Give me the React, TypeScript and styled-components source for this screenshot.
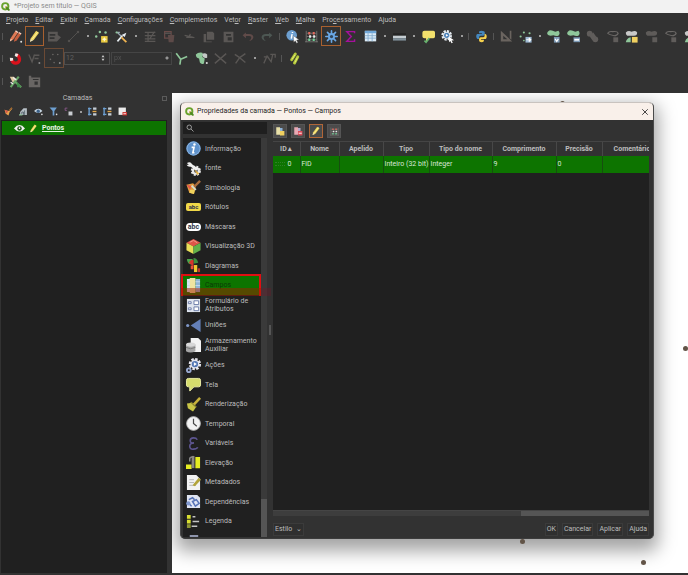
import React from 'react';
import styled, { createGlobalStyle, css } from 'styled-components';

const GlobalStyle = createGlobalStyle`
  * { box-sizing: border-box; }
  html, body, #root { height: 100%; margin: 0; }
  body {
    overflow: hidden;
    background: #323232;
    color: #bdbdbd;
    font: 7px/9px Roboto, "Noto Sans", sans-serif;
  }
  button, input, select { font: inherit; color: inherit; }
`;

/* ---------- icons ---------- */

const Svg = styled.svg<{ $size: number }>`
  display: block;
  flex: none;
  width: ${(p) => p.$size}px;
  height: ${(p) => p.$size}px;
  overflow: visible;
`;

const DIM = '#5a5755';
const YEL = '#f0d060';
const MINT = '#8fc79a';

const art: Record<string, React.ReactNode> = {
  logo: (
    <>
      <circle cx="7.6" cy="7.6" r="5.6" fill="none" stroke="#6aa32e" strokeWidth="3.4" />
      <path d="M8 8l3 .4 4.4 4.6-.2 2.4-2.4.1L8.300 11z" fill="#4f8a22" />
      <path d="M7.600 7.600l3.200.2-2.700 3z" fill="#e9a13b" />
    </>
  ),
  pencils: (
    <>
      <path d="M1 14l1-4L8 1l3 2-6 9z" fill="#e07a55" />
      <path d="M6 14.500l1-4L12 3l3 2-5.500 8z" fill="#c85f3e" />
      <path d="M8 1l3 2M12 3l3 2" stroke="#f3d3c4" strokeWidth="1.600" />
      <path d="M1 14l1-3 2 1z" fill="#f1dcc8" />
      <circle cx="15" cy="14.500" r="1.200" fill="#ddd" />
    </>
  ),
  pencil: (
    <>
      <path d="M2.500 14.500l1-4.500L10 1l3.600 2.400-6.600 9z" fill="#efd75c" />
      <path d="M5.200 11.400L12 2.400" stroke="#fff3b0" strokeWidth="1" />
      <path d="M2.500 14.500l.8-3.500 2.800 1.800z" fill="#e8dcc0" />
    </>
  ),
  save: <path d="M0 2h12v4l4 3-5 5H0zM2 5v2h7V5zM2 9v2h6V9z" fill={DIM} fillRule="evenodd" />,
  line: (
    <g stroke={DIM} fill={DIM}>
      <path d="M3 13L13 3" />
      <circle cx="2.500" cy="13.500" r="1" />
      <circle cx="13.500" cy="2.500" r="1" />
    </g>
  ),
  addPoint: (
    <>
      <g fill={MINT}>
        <circle cx="1.500" cy="8" r="1.500" />
        <circle cx="6" cy="2.500" r="1.500" />
        <circle cx="13" cy="3" r="1.500" />
      </g>
      <path d="M7.500 7.500h8v8h-8z" fill="#e9c93f" />
      <path d="M11.500 8.500l1 2 2 .9-2 1-1 2-1-2-2-1 2-.9z" fill="#fff8cf" />
    </>
  ),
  tools: (
    <>
      <path d="M1 3h5M3 3l5 5" stroke="#9aaab3" strokeWidth="1.600" fill="none" />
      <path d="M3 14L9 7" stroke="#e8eef2" strokeWidth="2" />
      <path d="M8 9l6 6" stroke="#f0b450" strokeWidth="2.200" />
      <path d="M8 6l6-2.500-2 5z" fill="#e8eef2" />
      <circle cx="2" cy="3" r="1.300" fill={MINT} />
    </>
  ),
  formEdit: (
    <g fill="none" stroke={DIM} strokeWidth="1.500">
      <path d="M1 3h13M1 7h13M1 11h13M1 14h13M5 3v11M13 2L7 11" />
    </g>
  ),
  trash: (
    <>
      <path d="M2 2h8v8H2z" fill="none" stroke="#6a4b48" strokeWidth="1.500" />
      <path d="M6 6h8l-1 9H7z" fill="#5d4a48" />
      <path d="M2 4h8" stroke={DIM} strokeWidth="1.500" />
    </>
  ),
  cut: <path d="M2 6.500l12 3M4 9h9M9 5l-1 3" stroke={DIM} strokeWidth="1.600" fill="none" />,
  copy: <path d="M6 2h7l2 2v8H6zM2 5h3v9h7v1H2z" fill={DIM} />,
  paste: <path d="M2 2h12v13H2zM5 5v2h6V5zM7 9v4h5V9z" fill={DIM} fillRule="evenodd" />,
  undo: (
    <path d="M6 3L2 6.500l4 3.500V7.500h4c4 0 3 4 0 6 7-1 7-8.500 0-8.500H6z" fill="#604b49" />
  ),
  redo: (
    <path d="M10 3l4 3.500-4 3.500V7.500H6c-4 0-3 4 0 6-7-1-7-8.500 0-8.500h4z" fill="#4d5753" />
  ),
  identify: (
    <>
      <circle cx="7" cy="6.500" r="6.500" fill="#6d9fd0" />
      <path d="M7.500 5l-1 5.500M8 2.500v1.300" stroke="#fff" strokeWidth="1.800" />
      <path d="M9 7l7 5-3 .4 1.600 3-1.500.8-1.600-3L9.600 15z" fill="#fff" stroke="#4a4a4a" strokeWidth=".4" />
    </>
  ),
  abacus: (
    <>
      <path d="M1.500 1v14M14.500 1v14M0 14.500h16M2 4h12M2 8h12M2 12h12" stroke="#7d7a78" fill="none" />
      <path d="M4 2.500h2.500v3H4zM9.500 2.500H12v3H9.500z" fill="#e56a5e" />
      <path d="M5 6.500h2.500v3H5zM10 6.500h2.500v3H10z" fill="#e8e8e8" />
      <path d="M4 10.500h2.500v3H4zM9.500 10.500H12v3H9.500z" fill="#6ed096" />
    </>
  ),
  gear: (
    <>
      <g stroke="#69a8e6" strokeWidth="2" strokeLinecap="round">
        <path d="M8 1v14M1 8h14M3 3l10 10M13 3L3 13" />
      </g>
      <circle cx="8" cy="8" r="4.300" fill="#69a8e6" />
      <circle cx="8" cy="8" r="2" fill="#32475c" />
    </>
  ),
  sigma: <path d="M13 4V2H3.500L9 8l-5.500 6H13v-2.500" fill="none" stroke="#a5109b" strokeWidth="1.800" />,
  table: (
    <>
      <path d="M1 1h14v13H1z" fill="#dcebf7" />
      <path d="M1 1h14v3H1z" fill="#6fa7d8" />
      <path d="M5 1v13M1 7h14M1 10h14M10 4v10" stroke="#7fa9cc" />
    </>
  ),
  ruler: (
    <>
      <path d="M0 4h16v3H0z" fill="#242424" />
      <path d="M0 7h16v3H0z" fill="#c5cdd2" />
      <path d="M0 10h16v3H0z" fill="#81919b" />
    </>
  ),
  tip: (
    <>
      <path d="M3 1h11q2 0 2 2v5q0 2-2 2H9l-4 4V10H3Q.500 10 .500 8V3Q.500 1 3 1z" fill="#f2e06c" />
      <path d="M3 13l2 2 4-5" stroke="#67b26f" strokeWidth="2" fill="none" />
    </>
  ),
  gearCursor: (
    <>
      <circle cx="7" cy="6.500" r="5.300" fill="none" stroke="#e6edf3" strokeWidth="2.600" strokeDasharray="2.700 1.400" />
      <circle cx="7" cy="6.500" r="4.400" fill="#e6edf3" />
      <circle cx="7" cy="6.500" r="3.200" fill="#4a80b8" />
      <path d="M6 4.800l3 1.700-3 1.700z" fill="#fff" />
      <path d="M9.500 8l6.500 4.500-3 .4 1.500 2.700-1.500.8-1.500-3-1.500 1.600z" fill="#fff" />
    </>
  ),
  python: (
    <>
      <path d="M8 1C5 1 5 2 5 4h3.500v1H3C1 5 1 11 3.500 11H5V9q0-2 2-2h3q2 0 2-2V3q0-2-4-2z" fill="#4587bd" />
      <path d="M8 15c3 0 3-1 3-3H7.500v-1H13c2 0 2-6-.5-6H11.800v2q0 2-2 2H7q-2 0-2 2v2q0 2 3 2z" fill="#f6d14d" />
    </>
  ),
  setSquare: <path d="M1 1l14 13H1zM4 7v4.500h5zM12 1h2v11l-2-2z" fill="#6a645f" fillRule="evenodd" />,
  movePoints: (
    <>
      <g fill={MINT}>
        <circle cx="2" cy="8" r="1.300" />
        <circle cx="6" cy="3" r="1.300" />
        <circle cx="13" cy="4" r="1.300" />
        <circle cx="6" cy="13" r="1" />
      </g>
      <path d="M8 8.500h7.500v7H8z" fill="#9db9d3" />
      <path d="M9 12h5M12 9.800l2.400 2.200-2.400 2.200" stroke="#fff" strokeWidth="1.400" fill="none" />
    </>
  ),
  shapeRotate: (
    <>
      <path d="M1 2q3-3 6-1t7 0q3 3 0 6-3 1-6-.5-4 1-6 0-3-2-1-4.500z" fill={MINT} />
      <path d="M8.500 8.500h7v7h-7z" fill="#7d9ab5" />
      <path d="M10 11l2 3 2-3" stroke="#fff" strokeWidth="1.500" fill="none" />
    </>
  ),
  shapeScale: (
    <>
      <path d="M1 2q3-3 6-1t7 0q3 3 0 6-3 1-6-.5-4 1-6 0-3-2-1-4.500z" fill={MINT} />
      <path d="M8 9h8v6H8z" fill="#7d9ab5" />
      <path d="M9 12h6" stroke="#fff" strokeWidth="2.200" />
    </>
  ),
  chain: (
    <g fill="#605d5b">
      <circle cx="4.500" cy="4.500" r="3.500" />
      <circle cx="11.500" cy="11.500" r="3.500" />
      <path d="M4 7l5-4 4 6-5 4z" />
    </g>
  ),
  shapeDimLine: (
    <>
      <path d="M2 4q2-3 6-2 6-1 7 2-1 3-5 3-6-1-8-3z" fill="none" stroke="#6b6866" strokeWidth="1.300" />
      <path d="M9 9h6v6H9z" fill="#605d5b" />
    </>
  ),
  shapeDim: <path d="M1 3q3-3 7-1 5-2 7 1 0 4-4 4H6Q1 8 1 3zM9 9h6v6H9z" fill="#5e5b59" />,
  shapeAdd: (
    <>
      <path d="M1 3q3-3 7-1 5-2 7 1 0 4-4 4H6Q1 8 1 3z" fill="#c8c8c8" />
      <path d="M1 15q1-5 6-6v6z" fill={MINT} />
      <path d="M8.500 8.500h7v7h-7z" fill={YEL} />
    </>
  ),
  magnet: (
    <>
      <path d="M3.500 9.500c1 6 10 5.500 9.500-1C12.600 6 11 4 9 3.500" fill="none" stroke="#d9121c" strokeWidth="4" />
      <path d="M1 7l4 .5v3l-3.500.5zM8 1.500l3.500 1-1.500 3.500-3-1z" fill="#f2e9e6" />
    </>
  ),
  vertex: (
    <>
      <path d="M1 3l4 9 3-9M8 4h6M8 8h5" stroke={DIM} strokeWidth="1.700" fill="none" />
      <circle cx="14" cy="13.500" r="1.200" fill="#8a8a8a" />
    </>
  ),
  snap: (
    <g fill="#6b6866">
      <circle cx="3" cy="9" r="1" />
      <circle cx="6" cy="3" r="1" />
      <circle cx="12" cy="3" r="1" />
      <circle cx="7.500" cy="13" r="1" />
      <circle cx="14.500" cy="13.500" r="1.200" fill="#8a8a8a" />
    </g>
  ),
  topo: (
    <path d="M1.500 1.500L7 9l8-3.500M7 9l-1 6.500" stroke={MINT} strokeWidth="2" fill="none" />
  ),
  avoid: (
    <>
      <path d="M1 3q3-3 8-2 2 3 0 5l3 2-1 6q-3 2-5-1L5 8Q1 7 1 3z" fill={MINT} />
      <path d="M9 2q4-1 6 1v4q-3 1-5-1z" fill="#c4c8c6" />
      <circle cx="14.500" cy="13.500" r="1.300" fill="#ddd" />
    </>
  ),
  cross: <path d="M1 2l14 12M15 2L1 14" stroke={DIM} strokeWidth="1.700" />,
  crossSnap: <path d="M1 3l6 4 7-5M7 7l-5 7M7 7l7 6" stroke={DIM} strokeWidth="1.800" fill="none" />,
  trace: <path d="M1 14l4-9 5 7 2-9M1 6h5l4 6M9 3h6v4" stroke={DIM} strokeWidth="1.600" fill="none" />,
  slashes: (
    <>
      <path d="M4.500 9.500L9 2.500M8 13.500l4-7.500" stroke="#b4c93c" strokeWidth="3.600" strokeLinecap="round" />
      <path d="M5 9L8.500 3.500M8.500 13l3-6" stroke="#e3e870" strokeWidth="1.200" />
    </>
  ),
  layout: (
    <>
      <path d="M1 2h5l4 5-5 3z" fill="#e0c9a0" />
      <path d="M2 15L12 2M7 8l8 7" stroke="#69a566" strokeWidth="2.600" />
      <path d="M5 3l4 3M2 9l3 2" stroke="#eee" strokeWidth="1.600" />
      <path d="M10 8l5 7h-5z" fill="#3f8a48" />
    </>
  ),
  frame: <path d="M1 1h3v2h11v12H1zM6 5v1h7V5zM8 8h4v4H8z" fill="#686563" fillRule="evenodd" />,
  broom: (
    <>
      <path d="M1 5l7 2 5-6 2 1.500L10 9l-2 6-5-3z" fill="#e8a24e" />
      <path d="M1 5l6 2-2 5z" fill="#d5534a" />
      <path d="M9 7l5-6" stroke="#8b5a2b" strokeWidth="2" />
    </>
  ),
  group: (
    <>
      <path d="M2 14V9l6-7h6v12z" fill="#b8c1c7" />
      <path d="M5 14V9h3v5M10 6v8" stroke="#4c5a64" strokeWidth="1.400" fill="none" />
      <path d="M0 13h6v2H0z" fill={MINT} />
    </>
  ),
  eye: (
    <>
      <path d="M0 8q8-10 16 0-8 9-16 0z" fill="#f1f1f1" />
      <circle cx="8" cy="8" r="3.200" fill="#1f5a1d" />
      <circle cx="8" cy="7.500" r="1.200" fill="#fff" />
    </>
  ),
  eyeBlue: (
    <>
      <path d="M0 7q8-8 15 0-7 7-15 0z" fill="#c6d5e2" />
      <circle cx="7.500" cy="7.500" r="3" fill="#3e6288" />
      <circle cx="14" cy="13" r="1.500" fill="#ddd" />
    </>
  ),
  filter: (
    <>
      <path d="M1 1h13L9.500 7v8h-3V7z" fill="#6d9fd0" />
      <circle cx="13.500" cy="13" r="1.500" fill="#ddd" />
    </>
  ),
  epsilonSmall: (
    <>
      <path d="M2 2h4M2 2v4h3" stroke="#8f5b8f" strokeWidth="1.500" fill="none" />
      <path d="M8 8h7v7H8z" fill="#c9cdd1" />
    </>
  ),
  expand: (
    <>
      <path d="M2 1v14M0 3h6M0 13h6" stroke="#6d9fd0" strokeWidth="2.400" fill="none" />
      <path d="M9 1h6v4H9zM9 11h6v4H9z" fill="#c5ced6" />
      <path d="M8 8h7" stroke="#e2a84b" strokeWidth="2.400" />
    </>
  ),
  remove: (
    <>
      <path d="M1 1h13v13H1z" fill="#ececec" />
      <path d="M8 9h8v6H8z" fill="#c9302c" />
      <path d="M9.500 12h5" stroke="#fff" strokeWidth="1.600" />
    </>
  ),
  newField: (
    <>
      <path d="M2 2h6v12H2z" fill="#e8e0a8" />
      <path d="M8 3h4v6H8z" fill="#8db3d9" />
      <path d="M8 8h7v7H8z" fill={YEL} />
    </>
  ),
  delField: (
    <>
      <path d="M2 2h6v12H2z" fill="#e9a9b3" />
      <path d="M8 3h4v6H8z" fill="#b9a9d0" />
      <path d="M8 8h7v7H8z" fill="#d94b58" />
      <path d="M9 11.500h5" stroke="#fff" strokeWidth="1.500" />
    </>
  ),
  search: (
    <g stroke="#b5b5b5" strokeWidth="1.600" fill="none">
      <circle cx="6.500" cy="6.500" r="4.500" />
      <path d="M10 10l5 5" />
    </g>
  ),
  close: <path d="M2.500 2.500l11 11M13.500 2.500l-11 11" stroke="#333" strokeWidth="1.800" />,
  info: (
    <>
      <circle cx="8" cy="8" r="7.700" fill="#5f92cb" />
      <circle cx="8" cy="8" r="6.900" fill="none" stroke="#8ab2de" />
      <path d="M6 6.800h2.600L7.300 12.500h1.700" stroke="#fff" strokeWidth="1.700" fill="none" />
      <circle cx="9" cy="3.800" r="1.300" fill="#fff" />
    </>
  ),
  source: (
    <>
      <circle cx="10.500" cy="10.500" r="4.200" fill="#e9e9e9" stroke="#e9e9e9" strokeWidth="2.400" strokeDasharray="2 1.300" />
      <circle cx="10.500" cy="10.500" r="2" fill="#4c4c4c" />
      <path d="M1 2q4-2 5.500 1.500L13 8l-2 2.500L5 6Q2 6.500.500 4l2.500.300z" fill="#f0f0f0" />
      <path d="M9 9l5 4-2 2z" fill="#e6b341" />
    </>
  ),
  symbology: (
    <>
      <path d="M.500 5l7-1.500 3 3-2 8.500-5-1.500z" fill="#e49b3e" />
      <path d="M.500 5l5 1-1 4.500z" fill="#e2574c" />
      <path d="M4.500 10.500l5 0-1 4.500-5-1.500z" fill="#efd25c" />
      <path d="M8 8l7-7" stroke="#a86b3c" strokeWidth="2.600" />
      <path d="M6 6l4.500 4.500" stroke="#d8e0d0" strokeWidth="2" />
    </>
  ),
  diagram: (
    <>
      <path d="M1 1h6v6Q1 7 1 1z" fill="#49a54a" />
      <path d="M8 0q4 0 5 5L8 6z" fill="#3c8e3f" />
      <path d="M3 5q2-4 5-3v7z" fill="#d5342d" />
      <path d="M5 8h3v4H5z" fill="#e94f38" />
      <path d="M8.500 7.500H12V15H8.500z" fill="#efc72e" />
      <path d="M12.500 11H15v4h-2.500z" fill="#c0392b" />
    </>
  ),
  cube: (
    <>
      <path d="M8 0l7.500 4L8 8 .500 4z" fill="#e05548" />
      <path d="M.500 4L8 8v8L.500 12z" fill="#e8df58" />
      <path d="M15.500 4L8 8v8l7.500-4z" fill="#62b04a" />
      <path d="M4 3.500l4-2 4 2.500" stroke="#f0a090" fill="none" />
    </>
  ),
  fields: (
    <>
      <path d="M1 1h4v14H1z" fill="#d7e6f2" />
      <path d="M10 1h5v14h-5z" fill="#8fb6d6" />
      <path d="M4 0h6v16H4z" fill="#efe5a0" />
      <path d="M1 4h3M10 4h5M1 8h3M10 8h5M1 11.500h3M10 11.500h5" stroke="#c5dbea" />
    </>
  ),
  form: (
    <>
      <path d="M1 1h14v14H1z" fill="#dfe5ee" />
      <path d="M2.500 4h3v2h-3zM8.500 3h5v4h-5zM2.500 10.500h3v2h-3zM8.500 9.500h5v4h-5z" fill="#fff" stroke="#6779a5" />
    </>
  ),
  joins: (
    <>
      <path d="M15.500 1v14L5 8z" fill="#6480b8" />
      <circle cx="1.800" cy="8" r="1.700" fill="#7f97c8" />
    </>
  ),
  storage: (
    <>
      <path d="M5 0h8l3 3v12H5z" fill="#f2f2f2" />
      <path d="M0 7v7q4.500 3 10 0V7z" fill="#a5a5a5" />
      <ellipse cx="5" cy="7" rx="5" ry="2.300" fill="#d7d7d7" />
      <path d="M0 10q5 3 10 0" stroke="#777" fill="none" />
    </>
  ),
  actions: (
    <>
      <circle cx="9.500" cy="6.500" r="5.300" fill="none" stroke="#e6e6ee" strokeWidth="2.600" strokeDasharray="2.600 1.500" />
      <circle cx="9.500" cy="6.500" r="4.800" fill="#e6e6ee" />
      <circle cx="9.500" cy="6.500" r="3.400" fill="#5578b5" />
      <path d="M8.400 4.500l3.200 2-3.200 2z" fill="#fff" />
      <circle cx="3" cy="13" r="2" fill="none" stroke="#98a8cf" strokeWidth="2" />
    </>
  ),
  display: <path d="M2.500 1.500h11q2 0 2 2v5q0 2-2 2H8.500L4 15v-4.500H2.500q-2 0-2-2v-5q0-2 2-2z" fill="#d6dd6d" stroke="#eef0a8" />,
  render: (
    <>
      <path d="M8 8.500L15 1" stroke="#c7b23c" strokeWidth="2.800" />
      <path d="M1 7l6-1 4 4.500L7.500 15.500 2 12z" fill="#c9c647" />
      <path d="M5 5.500l6 5.500" stroke="#8a8430" strokeWidth="1.300" />
    </>
  ),
  clock: (
    <>
      <circle cx="8" cy="8" r="7.300" fill="#f3f3f3" stroke="#c4c4c4" />
      <path d="M8 3v5l3.500 3" stroke="#4b4b4b" strokeWidth="1.300" fill="none" />
    </>
  ),
  epsilon: <path d="M12 4Q11 2 8 2 4.500 2 4.500 5T8.500 7.500Q4 7.500 4 11t4 3q3.500 0 4.500-2" stroke="#5d5590" strokeWidth="1.700" fill="none" />,
  elevation: (
    <>
      <path d="M0 10h6v5H0zM10 2h5v12h-5z" fill="#e5ec22" />
      <path d="M4 7V4q0-2 3-2" stroke="#888" strokeWidth="1.600" fill="none" />
      <path d="M6 1h3v13H6z" fill="#8a8780" />
    </>
  ),
  metadata: (
    <>
      <path d="M1 0h10l4 4v12H1z" fill="#f2f2f2" />
      <path d="M3.500 5h5M3.500 8h5M3.500 11h7" stroke="#b5b5b5" />
      <path d="M7 11l6.500-8 2.500 2-6.500 7z" fill="#b2a43b" />
    </>
  ),
  dependencies: (
    <>
      <path d="M1 1h11l3 3v11H1z" fill="#dfe4f2" />
      <path d="M3 6l4-2 2 2M7 8l4-2 3 4-4 3zM2 9l4 4" stroke="#5672b5" strokeWidth="1.600" fill="none" />
      <circle cx="2.500" cy="10" r="2.300" fill="#8098cf" />
    </>
  ),
  legend: (
    <>
      <path d="M1 1h4v4H1zM1 6h4v4H1z" fill="#d8df31" />
      <path d="M1 11h4v4H1z" fill="#8c9435" />
      <path d="M7 3h3M7 8h7M6 13h6" stroke="#c4c4c4" strokeWidth="1.700" />
    </>
  ),
  server: <path d="M4 2h9v3H4zM1 6h14v8H1z" fill="#8f95ad" />,
};

const Icon = ({ name, size = 13 }: { name: string; size?: number }) => (
  <Svg $size={size} viewBox="0 0 16 16" aria-hidden="true">
    {art[name]}
  </Svg>
);

/* ---------- main window ---------- */

const Window = styled.div`
  display: flex;
  flex-direction: column;
  height: 100vh;
`;

const TitleBar = styled.header`
  display: flex;
  flex: none;
  align-items: center;
  gap: 4px;
  height: 13px;
  padding-left: 1px;
  background: #f2f2f2;
  color: #8b8b8b;
`;

const MenuBar = styled.nav`
  display: flex;
  flex: none;
  align-items: center;
  gap: 7px;
  height: 13px;
  padding: 1px 0 0 6px;
`;

const plainButton = css`
  padding: 0;
  border: 0;
  background: none;
  white-space: nowrap;
`;

const MenuItem = styled.button`
  ${plainButton}
`;

const ToolbarRow = styled.div<{ $h: number }>`
  display: flex;
  flex: none;
  align-items: center;
  height: ${(p) => p.$h}px;
  overflow: hidden;
`;

const Handle = styled.span`
  flex: none;
  width: 3px;
  height: 7px;
  margin-left: 2px;
  border-left: 1px solid #555;
`;

const Tool = styled.button<{ $active?: boolean }>`
  ${plainButton}
  display: flex;
  flex: none;
  align-items: center;
  justify-content: center;
  width: 19px;
  height: 20px;
  border: 1px solid ${(p) => (p.$active ? '#a8602f' : 'transparent')};
  &:nth-child(even) { width: 20px; }
  &:disabled { border-color: #6b4a35; }
`;

const DropDot = styled.button`
  ${plainButton}
  display: flex;
  flex: none;
  justify-content: center;
  width: 9px;
  &::after {
    content: '';
    width: 2px;
    height: 2px;
    border-radius: 1px;
    background: #c0c0c0;
  }
`;

const Spin = styled.label`
  display: flex;
  flex: none;
  align-items: center;
  justify-content: space-between;
  width: 46px;
  height: 13px;
  margin-right: 1px;
  padding: 0 3px 0 1px;
  border: 1px solid #4e4e4e;
  color: #606060;
`;

const SpinInput = styled.input`
  width: 28px;
  padding: 0;
  border: 0;
  background: none;
  outline: 0;
`;

const UnitSelect = styled.select`
  flex: none;
  width: 61px;
  height: 13px;
  padding: 0 2px;
  appearance: none;
  border: 1px solid #4e4e4e;
  border-radius: 0;
  color: #606060;
  background: radial-gradient(circle at 55px 5px, #c0c0c0 1px, transparent 2px);
`;

const Workspace = styled.div`
  display: flex;
  flex: 1;
  min-height: 0;
`;

const LayerPanel = styled.aside`
  display: flex;
  flex: none;
  flex-direction: column;
  width: 172px;
  padding: 0 5px 2px 1px;
`;

const PanelTitle = styled.h2`
  display: flex;
  align-items: center;
  justify-content: center;
  height: 10px;
  margin: 0;
  font: inherit;
`;

const PanelName = styled.span`
  flex: 1;
  padding-right: 8px;
  text-align: center;
`;

const PanelClose = styled.button`
  ${plainButton}
  width: 5px;
  height: 5px;
  border: 1px solid #5b5b5b;
`;

const PanelTools = styled.div`
  display: flex;
  align-items: center;
  height: 17px;
`;

const PanelTool = styled.button`
  ${plainButton}
  display: flex;
  justify-content: center;
  width: 15px;
`;

const LayerTree = styled.ul`
  flex: 1;
  margin: 0;
  padding: 1px;
  list-style: none;
  background: #202020;
`;

const LayerRow = styled.li`
  display: flex;
  align-items: center;
  gap: 4px;
  height: 14px;
  padding-left: 12px;
  background: #0d7400;
  color: #e8f2e4;
  font-weight: 700;
  text-decoration: underline;
`;

const Canvas = styled.main`
  position: relative;
  flex: 1;
  margin-bottom: 2px;
  overflow: hidden;
  background: #fff;
`;

const MapPoint = styled.span<{ $x: number; $y: number }>`
  position: absolute;
  left: ${(p) => p.$x}px;
  top: ${(p) => p.$y}px;
  width: 5px;
  height: 5px;
  border-radius: 50%;
  background: #625447;
`;

/* ---------- dialog ---------- */

const Shadow = styled.div`
  position: absolute;
  inset: 12px 30px 22px 4px;
  border-radius: 8px;
  background: rgba(0, 0, 0, 0.36);
  filter: blur(9px);
`;

const Dialog = styled.section`
  position: absolute;
  inset: 9px 34px 34px 8px;
  display: flex;
  flex-direction: column;
  overflow: hidden;
  border: 1px solid #8d8986;
  border-color: #c9c3bf #4a4a4a #3c3c3c;
  border-radius: 5px;
  background: #323232;
`;

const DialogTitle = styled.header`
  display: flex;
  flex: none;
  align-items: center;
  gap: 3px;
  height: 17px;
  padding: 0 4px;
  background: #f9f0ea;
  color: #1c1c1c;
`;

const TitleText = styled.h1`
  flex: 1;
  margin: 0;
  font: inherit;
`;

const IconButton = styled.button`
  ${plainButton}
`;

const DialogBody = styled.div`
  display: flex;
  flex: 1;
  min-height: 0;
  padding: 2px 4px 1px 2px;
`;

const Sidebar = styled.div`
  display: flex;
  flex: none;
  flex-direction: column;
  width: 84px;
  gap: 4px;
`;

const Search = styled.label`
  display: flex;
  flex: none;
  align-items: center;
  height: 12px;
  padding-left: 3px;
  background: #1f1f1f;
`;

const SearchInput = styled.input`
  width: 60px;
  padding: 0 3px;
  border: 0;
  background: none;
  outline: 0;
`;

const ListArea = styled.div`
  display: flex;
  flex: 1;
  min-height: 0;
`;

const PageList = styled.nav`
  flex: 1;
  padding-top: 1px;
  background: #202020;
  clip-path: inset(0 -12px 0 -3px);
`;

const PageItem = styled.button<{ $selected?: boolean }>`
  ${plainButton}
  position: relative;
  display: flex;
  align-items: center;
  gap: 4px;
  width: 100%;
  height: 19px;
  padding-left: 3px;
  text-align: left;
  line-height: 8px;
  white-space: pre-line;
  &:nth-child(even), &:nth-child(9), &:nth-child(11) { height: 20px; }
  ${(p) =>
    p.$selected &&
    css`
      background: #0d7400;
      color: #0a3a06;
      &::before {
        content: '';
        position: absolute;
        inset: -1px 0 -1px -2px;
        border: 2px solid #e00f12;
        border-bottom: 0;
      }
      &::after {
        content: '';
        position: absolute;
        inset: 13px 0 -1px -3px;
        background: rgba(160, 30, 0, 0.5);
        box-shadow: 10px 0 0 rgba(160, 0, 30, 0.2);
      }
    `}
`;

const ListScroll = styled.div`
  display: flex;
  flex: none;
  align-items: flex-end;
  width: 6px;
  background: #3a3a3a;
`;

const ListThumb = styled.div`
  width: 100%;
  height: 38px;
  background: #555;
`;

const Splitter = styled.div`
  display: flex;
  flex: none;
  align-items: center;
  justify-content: center;
  width: 6px;
  &::after {
    content: '';
    width: 2px;
    height: 10px;
    background: #555;
  }
`;

const Content = styled.div`
  display: flex;
  flex: 1;
  flex-direction: column;
  min-width: 0;
`;

const FieldTools = styled.div`
  display: flex;
  flex: none;
  gap: 4px;
  height: 19px;
  padding: 2px 0;
`;

const FieldTool = styled.button<{ $active?: boolean }>`
  ${plainButton}
  display: flex;
  align-items: center;
  justify-content: center;
  width: 14px;
  height: 14px;
  border: 1px solid ${(p) => (p.$active ? '#b06638' : '#555')};
  background: #4b4b4b;
`;

const TableArea = styled.div`
  flex: 1;
  overflow: hidden;
  border-top: 1px solid #454545;
  background: #202020;
`;

const FieldTable = styled.table`
  width: 100%;
  min-width: 389px;
  table-layout: fixed;
  border-collapse: collapse;
`;

const Col = styled.col<{ $w: number }>`
  width: ${(p) => p.$w}px;
`;

const HeadCell = styled.th`
  height: 14px;
  padding: 0;
  border-right: 1px solid #484848;
  background: #323232;
  font-weight: 700;
  text-align: center;
  white-space: nowrap;
`;

const Cell = styled.td<{ $index?: boolean }>`
  height: 17px;
  padding: 0 ${(p) => (p.$index ? 8 : 1)}px 0 1px;
  border-right: 1px solid #174d10;
  background: #0d7400;
  color: #dbe6d8;
  white-space: nowrap;
  text-align: ${(p) => (p.$index ? 'right' : 'left')};
`;

const Grip = styled.span`
  display: inline-block;
  width: 10px;
  height: 4px;
  margin-right: 3px;
  border-top: 1px dotted #2f7f26;
  border-bottom: 1px dotted #2f7f26;
`;

const HScroll = styled.div`
  display: flex;
  flex: none;
  justify-content: flex-end;
  height: 6px;
  background: #3d3d3d;
  border-top: 1px solid #454545;
`;

const HThumb = styled.div`
  width: 34%;
  background: #555;
`;

const Footer = styled.footer`
  display: flex;
  flex: none;
  align-items: center;
  gap: 4px;
  height: 21px;
  padding-top: 5px;
`;

const FootButton = styled.button`
  ${plainButton}
  height: 13px;
  padding: 0 1px;
  border: 1px solid #3b3b3b;
  background: #2f2f2f;
`;

const Spacer = styled.span`
  flex: 1;
`;

/* label badges used by the two text-style icons */
const AbcBadge = styled.span<{ $mask?: boolean }>`
  flex: none;
  width: 15px;
  height: 8px;
  border-radius: ${(p) => (p.$mask ? 4 : 2)}px;
  background: ${(p) => (p.$mask ? '#fff' : '#f0d848')};
  color: #30364a;
  font-size: ${(p) => (p.$mask ? 7 : 6)}px;
  font-weight: 700;
  line-height: 8px;
  text-align: center;
`;

const menus: [string, string, string][] = [
  ['', 'P', 'rojeto'],
  ['', 'E', 'ditar'],
  ['', 'E', 'xibir'],
  ['', 'C', 'amada'],
  ['', 'C', 'onfigurações'],
  ['', 'C', 'omplementos'],
  ['Vet', 'o', 'r'],
  ['', 'R', 'aster'],
  ['', 'W', 'eb'],
  ['', 'M', 'alha'],
  ['Pro', 'c', 'essamento'],
  ['A', 'j', 'uda'],
];

const mainTools =
  '| pencils *pencil save line . addPoint tools . formEdit trash cut copy paste undo redo | identify abacus *gear sigma table . ruler . tip gearCursor . | python | setSquare movePoints . shapeRotate shapeScale chain shapeDimLine shapeAdd shapeDim shapeDimLine shapeAdd'.split(' ');
const snapLead = '| magnet vertex !snap'.split(' ');
const snapTail = 'topo avoid cross crossSnap . trace | slashes'.split(' ');
const layoutTools = '| layout frame'.split(' ');
const panelTools = 'broom group eyeBlue filter epsilonSmall . expand expand remove'.split(' ');

/* "|" is a toolbar handle, "." a drop-down dot, "*" marks a checked tool, "!" a checked but disabled one */
const Tools = ({ items }: { items: string[] }) => (
  <>
    {items.map((t, i) => {
      if (t === '|') return <Handle key={i} />;
      if (t === '.') return <DropDot key={i} aria-label="Mais opções" />;
      const name = t.replace(/^[*!]/, '');
      return (
        <Tool key={i} $active={t[0] === '*'} disabled={t[0] === '!'} aria-label={name}>
          <Icon name={name} />
        </Tool>
      );
    })}
  </>
);

const pages: [string, string][] = [
  ['info', 'Informação'],
  ['source', 'fonte'],
  ['symbology', 'Simbologia'],
  ['label', 'Rótulos'],
  ['mask', 'Máscaras'],
  ['cube', 'Visualização 3D'],
  ['diagram', 'Diagramas'],
  ['fields', 'Campos'],
  ['form', 'Formulário de\nAtributos'],
  ['joins', 'Uniões'],
  ['storage', 'Armazenamento\nAuxiliar'],
  ['actions', 'Ações'],
  ['display', 'Tela'],
  ['render', 'Renderização'],
  ['clock', 'Temporal'],
  ['epsilon', 'Variáveis'],
  ['elevation', 'Elevação'],
  ['metadata', 'Metadados'],
  ['dependencies', 'Dependências'],
  ['legend', 'Legenda'],
  ['server', ''],
];

const columns: [string, number, string][] = [
  ['ID ▴', 27, '0'],
  ['Nome', 39, 'FiD'],
  ['Apelido', 44, ''],
  ['Tipo', 46, 'Inteiro (32 bit)'],
  ['Tipo do nome', 63, 'Integer'],
  ['Comprimento', 64, '9'],
  ['Precisão', 46, '0'],
  ['Comentário', 60, ''],
];

const PropertiesDialog = () => (
  <Dialog role="dialog" aria-labelledby="dialog-title">
    <DialogTitle>
      <Icon name="logo" size={9} />
      <TitleText id="dialog-title">Propriedades da camada — Pontos — Campos</TitleText>
      <IconButton aria-label="Fechar">
        <Icon name="close" size={8} />
      </IconButton>
    </DialogTitle>
    <DialogBody>
      <Sidebar>
        <Search>
          <Icon name="search" size={8} />
          <SearchInput type="text" aria-label="Pesquisar" />
        </Search>
        <ListArea>
          <PageList>
            {pages.map(([icon, label]) => (
              <PageItem key={icon} $selected={icon === 'fields'} aria-label={label || 'Servidor'}>
                {icon === 'label' || icon === 'mask' ? (
                  <AbcBadge $mask={icon === 'mask'}>abc</AbcBadge>
                ) : (
                  <Icon name={icon} size={15} />
                )}
                {label}
              </PageItem>
            ))}
          </PageList>
          <ListScroll>
            <ListThumb />
          </ListScroll>
        </ListArea>
      </Sidebar>
      <Splitter />
      <Content>
        <FieldTools>
          <FieldTool aria-label="Novo campo"><Icon name="newField" size={10} /></FieldTool>
          <FieldTool aria-label="Apagar campo"><Icon name="delField" size={10} /></FieldTool>
          <FieldTool aria-label="Alternar edição" $active><Icon name="pencil" size={10} /></FieldTool>
          <FieldTool aria-label="Calculadora de campo"><Icon name="abacus" size={9} /></FieldTool>
        </FieldTools>
        <TableArea>
          <FieldTable>
            <colgroup>
              {columns.map(([name, w]) => <Col key={name} $w={w} />)}
            </colgroup>
            <thead>
              <tr>
                {columns.map(([name]) => <HeadCell key={name} scope="col">{name}</HeadCell>)}
              </tr>
            </thead>
            <tbody>
              <tr>
                {columns.map(([name, , value], i) => (
                  <Cell key={name} $index={i === 0}>
                    {i === 0 && <Grip />}
                    {value}
                  </Cell>
                ))}
              </tr>
            </tbody>
          </FieldTable>
        </TableArea>
        <HScroll>
          <HThumb />
        </HScroll>
        <Footer>
          <FootButton>Estilo &nbsp;⌄</FootButton>
          <Spacer />
          <FootButton>OK</FootButton>
          <FootButton>Cancelar</FootButton>
          <FootButton>Aplicar</FootButton>
          <FootButton>Ajuda</FootButton>
        </Footer>
      </Content>
    </DialogBody>
  </Dialog>
);

export default function App() {
  return (
    <Window>
      <GlobalStyle />
      <TitleBar>
        <Icon name="logo" size={9} />
        *Projeto sem título — QGIS
      </TitleBar>
      <MenuBar>
        {menus.map(([a, b, c]) => (
          <MenuItem key={a + b + c}>{a}<u>{b}</u>{c}</MenuItem>
        ))}
      </MenuBar>
      <ToolbarRow $h={20}>
        <Tools items={mainTools} />
      </ToolbarRow>
      <ToolbarRow $h={24}>
        <Tools items={snapLead} />
        <Spin>
          <SpinInput type="text" defaultValue="12" disabled aria-label="Tolerância" />
          <Svg $size={6} viewBox="0 0 6 8">
            <path d="M3 0l2 3H1zM3 8l2-3H1z" fill="#c8c8c8" />
          </Svg>
        </Spin>
        <UnitSelect disabled aria-label="Unidade">
          <option>px</option>
        </UnitSelect>
        <Tools items={snapTail} />
      </ToolbarRow>
      <ToolbarRow $h={23}>
        <Tools items={layoutTools} />
      </ToolbarRow>
      <Workspace>
        <LayerPanel>
          <PanelTitle>
            <PanelName>Camadas</PanelName>
            <PanelClose aria-label="Fechar painel" />
          </PanelTitle>
          <PanelTools>
            {panelTools.map((t, i) =>
              t === '.' ? (
                <DropDot key={i} aria-label="Mais opções" />
              ) : (
                <PanelTool key={i} aria-label={t}>
                  <Icon name={t} size={9} />
                </PanelTool>
              ),
            )}
          </PanelTools>
          <LayerTree>
            <LayerRow>
              <Icon name="eye" size={11} />
              <Icon name="pencil" size={9} />
              Pontos
            </LayerRow>
          </LayerTree>
        </LayerPanel>
        <Canvas>
          <Shadow />
          <MapPoint $x={388} $y={8} />
          <MapPoint $x={511} $y={253} />
          <MapPoint $x={348} $y={446} />
          <MapPoint $x={469} $y={467} />
          <PropertiesDialog />
        </Canvas>
      </Workspace>
    </Window>
  );
}
